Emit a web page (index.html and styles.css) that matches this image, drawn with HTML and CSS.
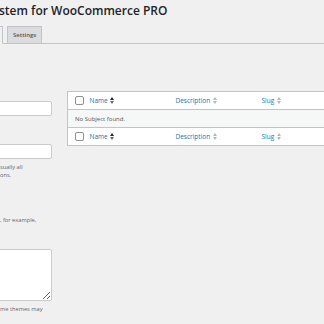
FILE: index.html
```html
<!DOCTYPE html>
<html lang="en">
<head>
    <meta charset="UTF-8">
    <meta name="viewport" content="width=device-width, initial-scale=1.0">
    <title>Subject System for WooCommerce PRO</title>
    <link rel="stylesheet" href="styles.css">
</head>
<body>
    <div class="wrap">
        <h1 class="page-title">stem for WooCommerce PRO</h1>

        <nav class="tabs">
            <a href="#" class="tab active"></a>
            <a href="#" class="tab">Settings</a>
        </nav>

        <div class="columns">
            <div class="col-form">
                <div class="field field-name">
                    <input type="text" class="text-input">
                </div>
                <div class="field field-slug">
                    <input type="text" class="text-input">
                    <p class="desc">sually all<br>ons.</p>
                </div>
                <div class="field field-parent">
                    <p class="desc">, for example,</p>
                </div>
                <div class="field field-description">
                    <textarea class="text-area"></textarea>
                    <p class="desc">me themes may</p>
                </div>
            </div>

            <div class="col-table">
                <table class="list-table">
                    <thead>
                        <tr>
                            <td class="check-col"><span class="checkbox"></span></td>
                            <th class="col-name"><a href="#">Name <span class="sort up"></span></a></th>
                            <th class="col-desc"><a href="#">Description <span class="sort"></span></a></th>
                            <th class="col-slug"><a href="#">Slug <span class="sort"></span></a></th>
                        </tr>
                    </thead>
                    <tbody>
                        <tr class="no-items">
                            <td colspan="4">No Subject found.</td>
                        </tr>
                    </tbody>
                    <tfoot>
                        <tr>
                            <td class="check-col"><span class="checkbox"></span></td>
                            <th class="col-name"><a href="#">Name <span class="sort up"></span></a></th>
                            <th class="col-desc"><a href="#">Description <span class="sort"></span></a></th>
                            <th class="col-slug"><a href="#">Slug <span class="sort"></span></a></th>
                        </tr>
                    </tfoot>
                </table>
            </div>
        </div>
    </div>
</body>
</html>
```

FILE: styles.css
```css
* {
    margin: 0;
    padding: 0;
    box-sizing: border-box;
}

html, body {
    background-color: #f0f0f1;
    overflow: hidden;
}

body {
    font-family: "Open Sans", sans-serif;
    font-size: 6.5px;
    color: #3c434a;
    width: 324px;
    height: 324px;
}

.wrap {
    padding-top: 4px;
}

.page-title {
    font-size: 12px;
    font-weight: 600;
    line-height: 14px;
    color: #1d2327;
    margin-left: -1px;
    white-space: nowrap;
}

.tabs {
    display: flex;
    gap: 2px;
    margin-top: 8px;
    border-bottom: 1px solid #c3c4c7;
    height: 18px;
}

.tab {
    display: block;
    height: 18px;
    padding: 0 5px;
    line-height: 16px;
    font-size: 6px;
    font-weight: 600;
    color: #50575e;
    text-decoration: none;
    background-color: #dcdcde;
    border: 1px solid #c3c4c7;
}

.tab.active {
    width: 40px;
    margin-left: -37px;
    background-color: #f0f0f1;
    border-bottom-color: #f0f0f1;
}

.tab:last-child {
    margin-left: 2px;
}

.columns {
    display: flex;
    margin-top: 47px;
}

.col-form {
    width: 52px;
    flex-shrink: 0;
}

.field-name {
    margin-top: 10px;
}

.field-slug {
    margin-top: 28px;
}

.field-parent {
    margin-top: 37px;
}

.field-description {
    margin-top: 25px;
}

.text-input {
    display: block;
    width: 62px;
    height: 15px;
    margin-left: -10px;
    background: #fff;
    border: 1px solid #c9cacc;
    border-radius: 2px;
}

.text-area {
    display: block;
    width: 62px;
    height: 52px;
    margin-left: -10px;
    background: #fff;
    border: 1px solid #c9cacc;
    border-radius: 2px;
    resize: both;
}

.desc {
    font-size: 5.7px;
    line-height: 8px;
    color: #646970;
    white-space: nowrap;
    margin-top: 4px;
}

.col-table {
    margin-left: 15px;
    width: 320px;
    flex-shrink: 0;
}

.list-table {
    width: 100%;
    border-collapse: collapse;
    background: #fff;
    border: 1px solid #c3c4c7;
    table-layout: fixed;
}

.list-table th,
.list-table td {
    height: 18px;
    text-align: left;
    font-weight: 400;
    vertical-align: middle;
}

.list-table thead tr {
    border-bottom: 1px solid #c3c4c7;
}

.list-table tfoot tr {
    border-top: 1px solid #c3c4c7;
}

.check-col {
    width: 22px;
    padding-left: 7px;
}

.col-name {
    width: 86px;
}

.col-desc {
    width: 86px;
}

.list-table th a {
    color: #2271b1;
    text-decoration: none;
    font-size: 6.5px;
}

.checkbox {
    display: block;
    width: 9px;
    height: 9px;
    border: 1px solid #8c8f94;
    border-radius: 2px;
    background: #fff;
}

.sort {
    display: inline-block;
    width: 4px;
    height: 7px;
    margin-left: 1px;
    vertical-align: -1px;
    position: relative;
}

.sort::before,
.sort::after {
    content: "";
    position: absolute;
    left: 0;
    border-left: 2px solid transparent;
    border-right: 2px solid transparent;
}

.sort::before {
    top: 0;
    border-bottom: 3px solid #b4b7ba;
}

.sort::after {
    bottom: 0;
    border-top: 3px solid #b4b7ba;
}

.sort.up::before {
    border-bottom-color: #1d2327;
}

.sort.up::after {
    border-top-color: #646970;
}

.no-items td {
    background: #f6f7f7;
    padding-left: 7px;
    font-size: 6px;
    color: #50575e;
}
```
